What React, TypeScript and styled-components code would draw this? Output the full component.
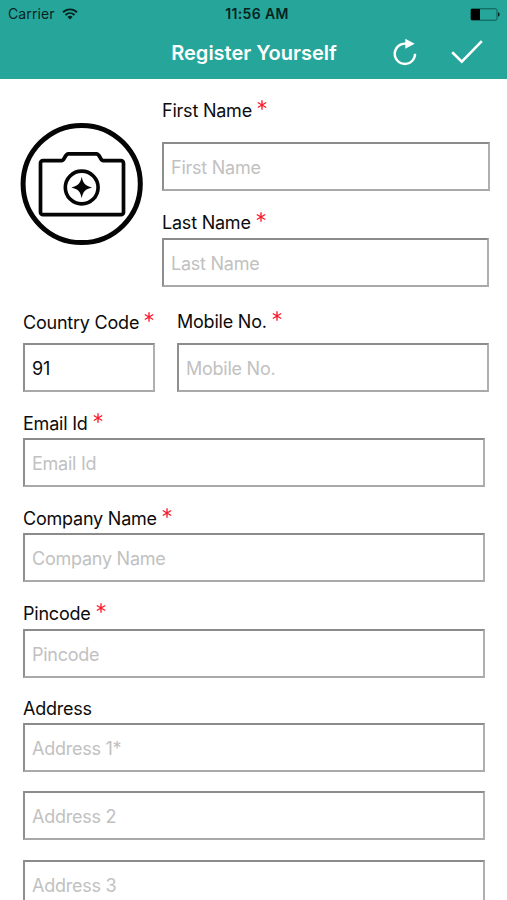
import React from "react";
import styled, { createGlobalStyle } from "styled-components";

const GlobalStyle = createGlobalStyle`
  * { box-sizing: border-box; }
  html, body { margin: 0; padding: 0; background: #fff; overflow: hidden; }
  body { font-family: Inter, "Liberation Sans", sans-serif; color: #0c0c0c; }
`;

const Screen = styled.div`
  width: 507px;
  height: 900px;
  overflow: hidden;
  background: #fff;
`;

const Header = styled.header`
  height: 79px;
  background: #26a69a;
  display: flex;
  flex-direction: column;
`;

const StatusBar = styled.div`
  height: 27px;
  padding: 0 7px 0 8px;
  display: grid;
  grid-template-columns: 1fr auto 1fr;
  align-items: center;
  font-size: 14px;
  line-height: 28px;
  color: #06231f;
`;

const Carrier = styled.div`
  display: flex;
  align-items: center;
  gap: 7px;
  letter-spacing: 0.1px;
`;

const Clock = styled.div`
  font-weight: 600;
  letter-spacing: 0.35px;
  padding-left: 6px;
`;

const Battery = styled.svg`
  justify-self: end;
`;

const NavBar = styled.div`
  flex: 1;
  display: grid;
  grid-template-columns: 1fr auto 1fr;
  align-items: center;
  color: #fff;
`;

const Title = styled.h1`
  grid-column: 2;
  margin: 0;
  padding-left: 1px;
  font-size: 20px;
  line-height: 24px;
  font-weight: 600;
`;

const Actions = styled.div`
  display: flex;
  align-items: center;
  justify-content: flex-end;
  gap: 33px;
  padding: 0 24px 3px 0;
`;

const IconButton = styled.button`
  display: flex;
  padding: 0;
  border: 0;
  background: none;
  color: inherit;
`;

const TopSection = styled.section`
  display: grid;
  grid-template-columns: 162px 1fr;
  align-items: start;
`;

const Avatar = styled.div`
  padding: 43px 0 0 19px;
`;

const Names = styled.div`
  padding-top: 19px;
`;

const PhoneRow = styled.section`
  display: flex;
  gap: 22px;
  padding-left: 23px;
`;

const Details = styled.section`
  padding-left: 23px;
`;

const FieldBox = styled.div<{ $width: number; $top: number }>`
  width: ${(p) => p.$width}px;
  padding-top: ${(p) => p.$top}px;
`;

const Label = styled.label<{ $gap: number }>`
  display: flex;
  gap: 5px;
  height: 24px;
  margin-bottom: ${(p) => p.$gap}px;
  font-size: 18px;
  line-height: 25px;
  letter-spacing: -0.22px;
  white-space: nowrap;
`;

const Required = styled.svg`
  margin-top: 2px;
  flex: none;
`;

const Input = styled.input`
  display: block;
  width: 100%;
  height: 49px;
  margin: 0;
  padding: 2px 6px 0 7px;
  border-style: solid;
  border-width: 2px;
  border-color: #8b8b8b #b0b0b0 #a9a9a9 #8f8f8f;
  border-radius: 0;
  outline: 0;
  background: #fff;
  color: #0c0c0c;
  font: 18px Inter, "Liberation Sans", sans-serif;
  letter-spacing: -0.25px;
  &::placeholder {
    color: #c1c1c1;
    opacity: 1;
  }
`;

interface FieldProps {
  label?: string;
  placeholder?: string;
  value?: string;
  required?: boolean;
  width: number;
  top: number;
  gap?: number;
}

function Asterisk() {
  return (
    <Required width="10" height="10" viewBox="0 0 10 10" stroke="#fb1a2c" strokeWidth="1.35">
      <path d="M5 .2v9.6M.8 2.5l8.4 5M9.2 2.5l-8.4 5" />
    </Required>
  );
}

function Field({ label, placeholder, value, required, width, top, gap = 4 }: FieldProps) {
  return (
    <FieldBox $width={width} $top={top}>
      {label && (
        <Label $gap={gap}>
          {label}
          {required && <Asterisk />}
        </Label>
      )}
      <Input placeholder={placeholder} defaultValue={value} />
    </FieldBox>
  );
}

function WifiIcon() {
  return (
    <svg width="16" height="12" viewBox="0 0 16 12" fill="none" stroke="#06231f" strokeWidth="1.9">
      <path d="M1 4.3c4-3.9 10-3.9 14 0" />
      <path d="M3.5 7c2.6-2.5 6.4-2.5 9 0" />
      <path d="M8 11.5 5.4 8.9c1.5-1.4 3.7-1.4 5.2 0z" fill="#06231f" stroke="none" />
    </svg>
  );
}

function CameraIcon() {
  return (
    <svg width="125" height="125" viewBox="0 0 125 125" fill="none" stroke="#050505">
      <circle cx="62.7" cy="62" r="58.6" strokeWidth="5" />
      <path
        d="M24 38.7h18.5c3.2 0 3.3-6.9 6.8-6.9h28.2c3.5 0 3.6 6.9 6.8 6.9H102a2.5 2.5 0 0 1 2.5 2.5v49a2.5 2.5 0 0 1-2.5 2.5H24a2.5 2.5 0 0 1-2.5-2.5v-49a2.5 2.5 0 0 1 2.5-2.5z"
        strokeWidth="3.7"
      />
      <circle cx="62.7" cy="65.5" r="16.4" strokeWidth="3.6" />
      <path d="M62.7 54.8c1.3 6.6 3.5 9.1 10.3 10.7-6.8 1.6-9 4.1-10.3 10.7-1.3-6.6-3.5-9.1-10.3-10.7 6.8-1.6 9-4.1 10.3-10.7z" fill="#050505" stroke="none" />
    </svg>
  );
}

export default function App() {
  return (
    <Screen>
      <GlobalStyle />
      <Header>
        <StatusBar>
          <Carrier>
            Carrier
            <WifiIcon />
          </Carrier>
          <Clock>11:56 AM</Clock>
          <Battery width="30" height="13" viewBox="0 0 30 13">
            <rect x=".8" y=".8" width="26.2" height="11.4" rx="1.5" fill="none" stroke="#0f5950" strokeWidth="1" />
            <path d="M1 1h9v11H1z" fill="#000" />
            <path d="M28 4.3c2.2.6 2.2 3.8 0 4.4z" fill="#06231f" />
          </Battery>
        </StatusBar>
        <NavBar>
          <Title>Register Yourself</Title>
          <Actions>
            <IconButton aria-label="Reset">
              <svg width="26" height="28" viewBox="0 0 26 28" fill="none" stroke="#fff" strokeWidth="2.3">
                <path d="M14.5 5.6h-1.6a10.2 10.2 0 1 0 10.2 10.2" />
                <path d="M13.3.8v10l9.4-5.1z" fill="#fff" stroke="none" />
              </svg>
            </IconButton>
            <IconButton aria-label="Save">
              <svg width="32" height="24" viewBox="0 0 32 24" fill="none" stroke="#fff" strokeWidth="2.6">
                <path d="M1.2 12.2 10.8 21.6 30.8 1.2" />
              </svg>
            </IconButton>
          </Actions>
        </NavBar>
      </Header>
      <TopSection>
        <Avatar>
          <CameraIcon />
        </Avatar>
        <Names>
          <Field label="First Name" placeholder="First Name" required width={328} top={0} gap={20} />
          <Field label="Last Name" placeholder="Last Name" required width={327} top={19} />
        </Names>
      </TopSection>
      <PhoneRow>
        <Field label="Country Code" value="91" required width={132} top={23} gap={9} />
        <Field label="Mobile No." placeholder="Mobile No." required width={312} top={22} gap={10} />
      </PhoneRow>
      <Details>
        <Field label="Email Id" placeholder="Email Id" required width={462} top={19} gap={3} />
        <Field label="Company Name" placeholder="Company Name" required width={462} top={19} gap={3} />
        <Field label="Pincode" placeholder="Pincode" required width={462} top={19} />
        <Field label="Address" placeholder="Address 1*" width={462} top={18} gap={3} />
        <Field placeholder="Address 2" width={462} top={19} />
        <Field placeholder="Address 3" width={462} top={20} />
      </Details>
    </Screen>
  );
}
